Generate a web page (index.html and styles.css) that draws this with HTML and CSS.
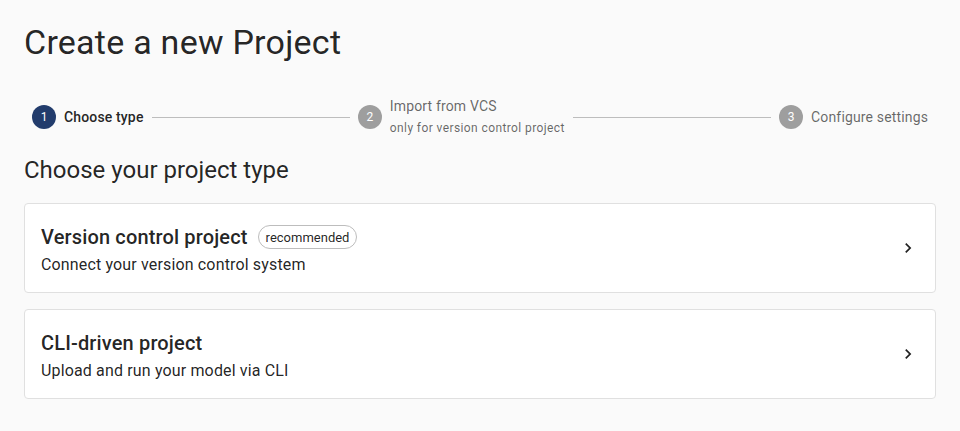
FILE: index.html
```html
<!DOCTYPE html>
<html lang="en">
<head>
<meta charset="utf-8">
<title>Create a new Project</title>
<link rel="stylesheet" href="styles.css">
</head>
<body>
<main class="page">
  <h1 class="page-title">Create a new Project</h1>

  <div class="stepper">
    <div class="step active">
      <span class="step-icon">1</span>
      <div class="step-label"><span class="step-name">Choose type</span></div>
    </div>
    <div class="connector"></div>
    <div class="step">
      <span class="step-icon">2</span>
      <div class="step-label">
        <span class="step-name">Import from VCS</span>
        <span class="step-optional">only for version control project</span>
      </div>
    </div>
    <div class="connector"></div>
    <div class="step">
      <span class="step-icon">3</span>
      <div class="step-label"><span class="step-name">Configure settings</span></div>
    </div>
  </div>

  <h2 class="section-title">Choose your project type</h2>

  <div class="card-list">
    <a class="card" href="#">
      <div class="card-body">
        <div class="card-title-row">
          <span class="card-title">Version control project</span>
          <span class="chip">recommended</span>
        </div>
        <div class="card-desc">Connect your version control system</div>
      </div>
      <svg class="chevron" viewBox="0 0 24 24" width="20" height="20" aria-hidden="true"><path d="M10 6 8.59 7.41 13.17 12l-4.58 4.59L10 18l6-6z"/></svg>
    </a>
    <a class="card" href="#">
      <div class="card-body">
        <div class="card-title-row">
          <span class="card-title">CLI-driven project</span>
        </div>
        <div class="card-desc">Upload and run your model via CLI</div>
      </div>
      <svg class="chevron" viewBox="0 0 24 24" width="20" height="20" aria-hidden="true"><path d="M10 6 8.59 7.41 13.17 12l-4.58 4.59L10 18l6-6z"/></svg>
    </a>
  </div>
</main>
</body>
</html>
```
FILE: styles.css
```css
* { box-sizing: border-box; }

html, body {
  margin: 0;
  padding: 0;
  background: #fafafa;
}

body {
  font-family: Roboto, "Liberation Sans", Arial, sans-serif;
  color: rgba(0, 0, 0, 0.87);
}

.page {
  padding: 21px 24px 0;
}

.page-title {
  margin: 0;
  font-size: 34px;
  line-height: 42px;
  font-weight: 400;
  letter-spacing: 0.25px;
  color: rgba(0, 0, 0, 0.87);
}

.stepper {
  display: flex;
  align-items: center;
  margin-top: 34px;
  height: 40px;
}

.step {
  display: flex;
  align-items: center;
  padding: 0 8px;
}

.step-icon {
  width: 24px;
  height: 24px;
  border-radius: 50%;
  background: #9e9e9e;
  color: #fff;
  font-size: 12px;
  line-height: 24px;
  text-align: center;
  flex: none;
}

.step.active .step-icon {
  background: #223c6c;
}

.step-label {
  display: flex;
  flex-direction: column;
  padding-left: 8px;
}

.step-name {
  font-size: 14px;
  line-height: 20px;
  letter-spacing: 0.15px;
  color: rgba(0, 0, 0, 0.6);
}

.step.active .step-name {
  font-weight: 500;
  color: rgba(0, 0, 0, 0.87);
}

.step-optional {
  margin-top: 2px;
  font-size: 12px;
  line-height: 20px;
  letter-spacing: 0.4px;
  color: rgba(0, 0, 0, 0.6);
}

.connector {
  flex: 1 1 auto;
  border-top: 1px solid #bdbdbd;
}

.section-title {
  margin: 17px 0 0;
  font-size: 24px;
  line-height: 32px;
  font-weight: 400;
  color: rgba(0, 0, 0, 0.87);
}

.card-list {
  display: flex;
  flex-direction: column;
  gap: 16px;
  margin-top: 17px;
}

.card {
  display: flex;
  align-items: center;
  height: 90px;
  padding: 0 16px;
  background: #fff;
  border: 1px solid #e0e0e0;
  border-radius: 4px;
  text-decoration: none;
  color: inherit;
}

.card-body {
  flex: 1 1 auto;
  padding-top: 4px;
}

.card-title-row {
  display: flex;
  align-items: center;
  height: 28px;
}

.card-title {
  font-size: 20px;
  line-height: 28px;
  font-weight: 500;
  letter-spacing: 0.15px;
  color: rgba(0, 0, 0, 0.87);
}

.chip {
  display: inline-flex;
  align-items: center;
  height: 24px;
  margin-left: 10px;
  padding: 0 7px;
  border: 1px solid #bdbdbd;
  border-radius: 12px;
  font-size: 13px;
  color: rgba(0, 0, 0, 0.87);
}

.card-desc {
  margin-top: 2px;
  font-size: 16px;
  line-height: 24px;
  letter-spacing: 0.15px;
  color: rgba(0, 0, 0, 0.87);
}

.chevron {
  flex: none;
  fill: rgba(0, 0, 0, 0.87);
  margin-right: 1px;
}
```
